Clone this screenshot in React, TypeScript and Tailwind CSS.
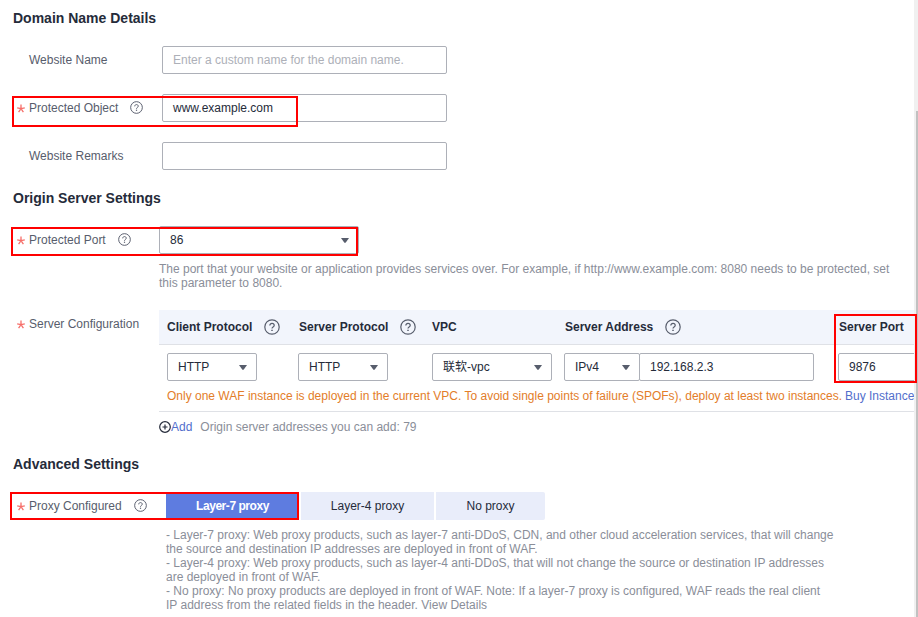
import type { ReactNode } from "react";

function Help({ size = 13, className = "" }: { size?: number; className?: string }) {
  return (
    <svg width={size} height={size} viewBox="0 0 16 16" fill="none" stroke="#575d6c" strokeWidth="1.2" className={"shrink-0 " + className}>
      <circle cx="8" cy="8" r="7.2" />
      <path d="M5.8 6.6C5.8 5.2 6.8 4.4 8 4.4s2.2.8 2.2 2c0 1.5-2.2 1.6-2.2 3.1" />
      <path d="M8 10.7v1.4" strokeWidth="1.5" />
    </svg>
  );
}

function Star() {
  return (
    <svg width="9" height="9" viewBox="0 0 9 9" fill="none" stroke="#f66f6a" strokeWidth="1.3" className="ml-px shrink-0">
      <path d="M4 0.4V4.6M0.2 3.9L4 4.6L7.8 3.9M1.6 8.2L4 4.6L6.4 8.2" />
    </svg>
  );
}

function Heading({ children, className = "" }: { children: ReactNode; className?: string }) {
  return <h2 className={"h-5 pl-[13px] text-sm leading-5 font-bold whitespace-nowrap text-[#252b3a] " + className}>{children}</h2>;
}

function Label({ text, required, help }: { text: string; required?: boolean; help?: boolean }) {
  return (
    <div className="flex h-7 shrink-0 items-center whitespace-nowrap text-[#575d6c]">
      <span className="flex w-[29px] pl-4">{required && <Star />}</span>
      <span>{text}</span>
      {help && <Help className="mb-px ml-3" />}
    </div>
  );
}

function Select({ value, className = "" }: { value: string; className?: string }) {
  return (
    <div className={"flex h-7 shrink-0 items-center justify-between rounded-xs border border-[#adb0b8] bg-white pr-[9px] pl-2.5 whitespace-nowrap text-[#252b3a] " + className}>
      <span>{value}</span>
      <svg width="8" height="5" viewBox="0 0 8 5" fill="#575d6c"><path d="M0 0H8L4.6 4.7H3.4Z" /></svg>
    </div>
  );
}

function Field({ children, className = "" }: { children?: ReactNode; className?: string }) {
  return (
    <div className={"flex h-7 shrink-0 items-center rounded-xs border border-[#adb0b8] bg-white pl-2.5 whitespace-nowrap " + className}>{children}</div>
  );
}

export default function App() {
  return (
    <div className="relative flex h-[617px] w-[918px] overflow-hidden bg-white font-['Liberation_Sans','Noto_Sans_CJK_SC',sans-serif] text-xs">
      <main className="w-[914px] shrink-0 overflow-hidden pt-2">
        <Heading>Domain Name Details</Heading>
        <div className="mt-[18px] flex flex-col gap-5">
          <div className="flex">
            <div className="w-[162px]"><Label text="Website Name" /></div>
            <Field className="w-[285px] text-[#adb0b8]">Enter a custom name for the domain name.</Field>
          </div>
          <div className="flex">
            <div className="w-[162px]"><Label text="Protected Object" required help /></div>
            <Field className="w-[285px] text-[#252b3a]">www.example.com</Field>
          </div>
          <div className="flex">
            <div className="w-[162px]"><Label text="Website Remarks" /></div>
            <Field className="w-[285px]" />
          </div>
        </div>

        <Heading className="mt-[18px]">Origin Server Settings</Heading>
        <div className="mt-[18px] flex">
          <div className="w-[159px]"><Label text="Protected Port" required help /></div>
          <div>
            <Select value="86" className="w-[200px]" />
            <p className="mt-2 leading-[14px] whitespace-nowrap text-[#8a8e99]">
              The port that your website or application provides services over. For example, if http://www.example.com: 8080 needs to be protected, set<br />
              this parameter to 8080.
            </p>
          </div>
        </div>

        <div className="mt-5 flex">
          <div className="w-[159px]"><Label text="Server Configuration" required /></div>
          <div className="w-[755px]">
            <div className="flex h-[35px] items-center border-b border-[#dfe1e6] bg-[#f2f5fc] pl-2 font-bold whitespace-nowrap text-[#252b3a]">
              <div className="flex w-[132px] items-center">Client Protocol<Help size={16} className="ml-3" /></div>
              <div className="flex w-[133px] items-center">Server Protocol<Help size={16} className="ml-3" /></div>
              <div className="w-[133px]">VPC</div>
              <div className="flex w-[274px] items-center">Server Address<Help size={16} className="ml-3" /></div>
              <div>Server Port</div>
            </div>
            <div className="h-[67px] border-b border-[#dfe1e6] pt-2 pl-2">
              <div className="flex">
                <Select value="HTTP" className="w-[90px]" />
                <Select value="HTTP" className="ml-[41px] w-[90px]" />
                <Select value="联软-vpc" className="ml-11 w-[120px]" />
                <Select value="IPv4" className="ml-3 w-[76px]" />
                <Field className="-ml-px w-[175px] text-[#252b3a]">192.168.2.3</Field>
                <Field className="ml-6 w-[100px] text-[#252b3a]">9876</Field>
              </div>
              <p className="mt-[7px] leading-4 whitespace-nowrap text-[#e37d29]">
                Only one WAF instance is deployed in the current VPC. To avoid single points of failure (SPOFs), deploy at least two instances.
                <a className="ml-[3px] text-[#526ecc]">Buy Instance</a>
              </p>
            </div>
            <div className="mt-[7px] flex h-4 items-center whitespace-nowrap">
              <svg width="12" height="12" viewBox="0 0 12 12" fill="none" stroke="#252b3a" strokeWidth="1.2" className="shrink-0">
                <circle cx="6" cy="6" r="5.3" /><path d="M3.5 6H8.5M6 3.5V8.5" strokeWidth="1.2" />
              </svg>
              <a className="text-[#526ecc]">Add</a>
              <span className="ml-2 text-[#8a8e99]">Origin server addresses you can add: 79</span>
            </div>
          </div>
        </div>

        <Heading className="mt-[19px]">Advanced Settings</Heading>
        <div className="mt-[18px] flex">
          <div className="w-[166px]"><Label text="Proxy Configured" required help /></div>
          <div>
            <div className="flex h-7 gap-0.5 text-center leading-7 text-[#252b3a]">
              <div className="w-[133px] bg-[#5e7ce0] font-bold tracking-[-0.45px] text-white">Layer-7 proxy</div>
              <div className="w-[133px] bg-[#e9edfa]">Layer-4 proxy</div>
              <div className="w-[109px] rounded-r-xs bg-[#e9edfa]">No proxy</div>
            </div>
            <p className="mt-2 leading-[14px] whitespace-nowrap text-[#8a8e99]">
              - Layer-7 proxy: Web proxy products, such as layer-7 anti-DDoS, CDN, and other cloud acceleration services, that will change<br />
              the source and destination IP addresses are deployed in front of WAF.<br />
              - Layer-4 proxy: Web proxy products, such as layer-4 anti-DDoS, that will not change the source or destination IP addresses<br />
              are deployed in front of WAF.<br />
              - No proxy: No proxy products are deployed in front of WAF. Note: If a layer-7 proxy is configured, WAF reads the real client<br />
              IP address from the related fields in the header. View Details
            </p>
          </div>
        </div>
      </main>
      <div className="w-1 bg-[#f0f0f0] pt-[111px] pl-0.5"><div className="h-full bg-[#c1c1c1]" /></div>

      <div className="absolute top-[96px] left-[12px] h-[31px] w-[286px] border-2 border-[#ff0000]" />
      <div className="absolute top-[227px] left-[11px] h-[29px] w-[347px] border-2 border-[#ff0000]" />
      <div className="absolute top-[314px] left-[834px] h-[69px] w-[83px] border-2 border-[#ff0000]" />
      <div className="absolute top-[492px] left-[10px] h-[28px] w-[289px] border-2 border-[#ff0000]" />
    </div>
  );
}
